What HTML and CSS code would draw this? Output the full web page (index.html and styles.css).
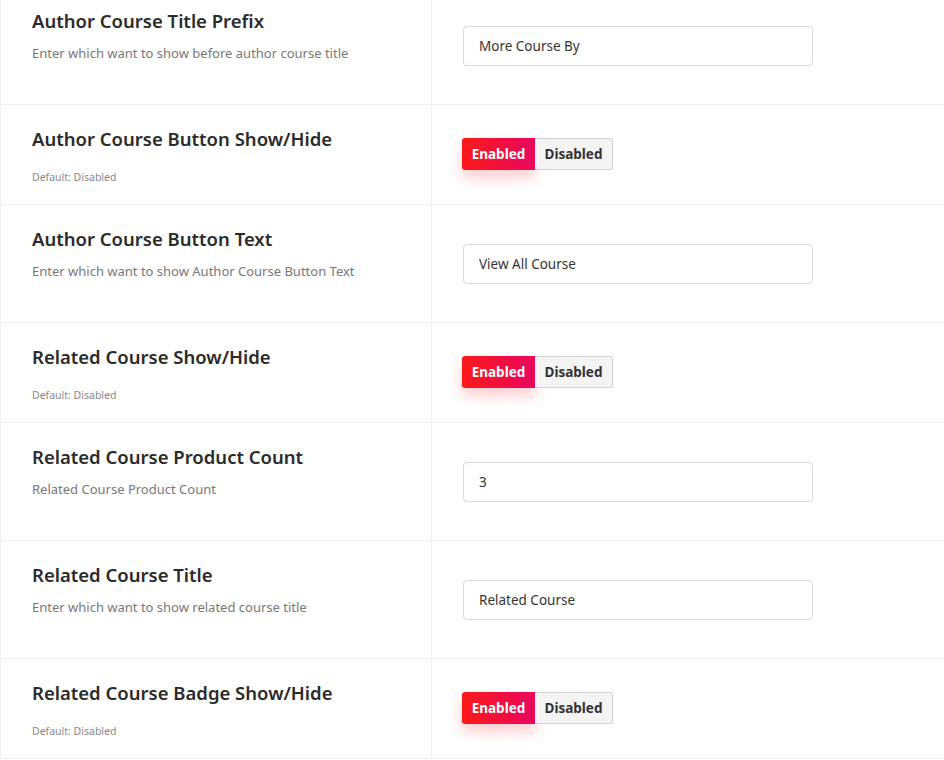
FILE: index.html
```html
<!DOCTYPE html>
<html>
<head>
<meta charset="utf-8">
<link rel="stylesheet" href="styles.css">
</head>
<body>
<div class="settings">
  <div class="row tall">
    <div class="label">
      <h3 class="title">Author Course Title Prefix</h3>
      <p class="desc">Enter which want to show before author course title</p>
    </div>
    <div class="control"><input class="field" type="text" value="More Course By"></div>
  </div>
  <div class="row short">
    <div class="label">
      <h3 class="title">Author Course Button Show/Hide</h3>
      <p class="hint">Default: Disabled</p>
    </div>
    <div class="control"><div class="toggle"><span class="on">Enabled</span><span class="off">Disabled</span></div></div>
  </div>
  <div class="row tall">
    <div class="label">
      <h3 class="title">Author Course Button Text</h3>
      <p class="desc">Enter which want to show Author Course Button Text</p>
    </div>
    <div class="control"><input class="field" type="text" value="View All Course"></div>
  </div>
  <div class="row short">
    <div class="label">
      <h3 class="title">Related Course Show/Hide</h3>
      <p class="hint">Default: Disabled</p>
    </div>
    <div class="control"><div class="toggle"><span class="on">Enabled</span><span class="off">Disabled</span></div></div>
  </div>
  <div class="row tall">
    <div class="label">
      <h3 class="title">Related Course Product Count</h3>
      <p class="desc">Related Course Product Count</p>
    </div>
    <div class="control"><input class="field" type="text" value="3"></div>
  </div>
  <div class="row tall">
    <div class="label">
      <h3 class="title">Related Course Title</h3>
      <p class="desc">Enter which want to show related course title</p>
    </div>
    <div class="control"><input class="field" type="text" value="Related Course"></div>
  </div>
  <div class="row short">
    <div class="label">
      <h3 class="title">Related Course Badge Show/Hide</h3>
      <p class="hint">Default: Disabled</p>
    </div>
    <div class="control"><div class="toggle"><span class="on">Enabled</span><span class="off">Disabled</span></div></div>
  </div>
</div>
</body>
</html>
```

FILE: styles.css
```css
html, body {
  margin: 0;
  padding: 0;
  background: #fff;
  overflow: hidden;
}
body {
  font-family: "Noto Sans", "Open Sans", sans-serif;
  color: #2c2c2c;
}
.settings {
  margin-top: -13px;
  display: flex;
  flex-direction: column;
}
.row {
  display: grid;
  grid-template-columns: 432px 1fr;
  border-bottom: 1px solid #f0f0f0;
  box-sizing: border-box;
}
.row.tall { height: 118px; }
.row.short { height: 100px; }
.label {
  border-left: 1px solid #f0f0f0;
  border-right: 1px solid #f0f0f0;
  padding: 21px 0 0 31px;
}
.title {
  margin: 0;
  font-size: 18.5px;
  line-height: 26px;
  font-weight: 600;
  color: #2b2b2b;
}
.desc {
  margin: 9px 0 0;
  font-size: 13px;
  line-height: 20px;
  color: #777;
}
.hint {
  margin: 17px 0 0;
  font-size: 10.5px;
  line-height: 16px;
  color: #888;
}
.control {
  display: flex;
  align-items: center;
  padding-left: 31px;
}
.field {
  box-sizing: border-box;
  width: 350px;
  height: 40px;
  border: 1px solid #d9d9d9;
  border-radius: 4px;
  padding: 0 15px;
  font-family: "Noto Sans", "Open Sans", sans-serif;
  font-size: 13.5px;
  color: #333;
  background: #fff;
  outline: none;
}
.toggle {
  display: flex;
  height: 32px;
  margin: -1px 0 0 -1px;
}
.toggle span {
  display: flex;
  align-items: center;
  justify-content: center;
  font-size: 13.5px;
  font-weight: 700;
  box-sizing: border-box;
}
.on {
  width: 73px;
  color: #fff;
  background: linear-gradient(to right, #fb1a1a, #e9075f);
  border-radius: 3px 0 0 3px;
  box-shadow: 0 8px 14px rgba(250, 30, 40, 0.22);
}
.off {
  width: 78px;
  color: #333;
  background: #f4f4f4;
  border: 1px solid #cfcfcf;
  border-left: none;
  border-radius: 0 3px 3px 0;
}
```
